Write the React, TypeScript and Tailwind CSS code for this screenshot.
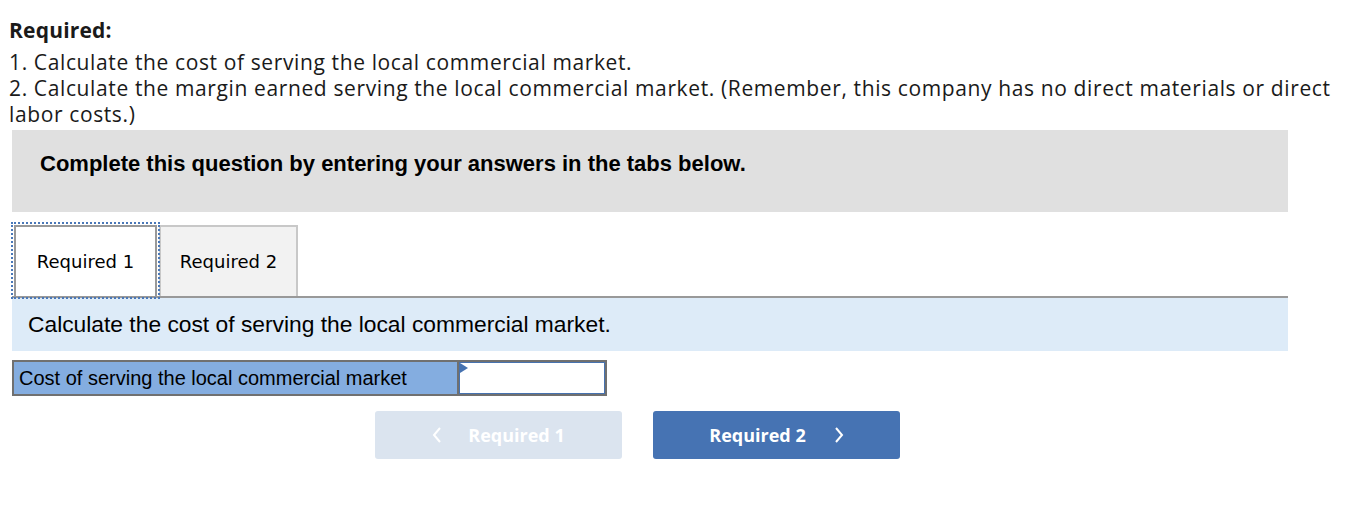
import React from 'react';

const TabButton = ({ label, active }: { label: string; active?: boolean }) => (
  <div
    className={
      active
        ? 'relative flex h-[71px] w-[143px] items-center justify-center border-2 border-b-0 border-[#999999] bg-white outline-2 outline-dotted outline-offset-[1px] outline-[#4a78b8]'
        : 'flex h-[71px] w-[139px] items-center justify-center border-2 border-b-0 border-[#c8c8c8] bg-[#f2f2f2]'
    }
  >
    <span className="font-['DejaVu_Sans',sans-serif] text-[18px] text-black">{label}</span>
  </div>
);

export default function App() {
  return (
    <div className="min-h-[508px] w-[1354px] bg-white pt-[17px] text-black">
      <div className="pl-[9px] pr-[12px] font-['Open_Sans',sans-serif] text-[21px] leading-[26px] tracking-[0.62px] text-[#1a1a1a]">
        <div className="mb-[6px] font-bold tracking-[0.2px]">Required:</div>
        <div>1. Calculate the cost of serving the local commercial market.</div>
        <div>
          2. Calculate the margin earned serving the local commercial market. (Remember, this company has no direct materials or direct labor costs.)
        </div>
      </div>

      <div className="ml-[12px] mt-[3px] w-[1276px]">
        <div className="h-[82px] bg-[#e0e0e0] pl-[28px] pt-[17px] font-['Liberation_Sans',Arial,sans-serif] text-[22px] font-bold">
          Complete this question by entering your answers in the tabs below.
        </div>

        <div className="mt-[13px] flex gap-[2px] pl-[2px]">
          <TabButton label="Required 1" active />
          <TabButton label="Required 2" />
        </div>
        <div className="h-[2px] bg-[#999999]" />

        <div className="flex h-[53px] items-center bg-[#ddebf8] pl-[16px] font-['Liberation_Sans',Arial,sans-serif] text-[22.8px]">
          Calculate the cost of serving the local commercial market.
        </div>

        <div className="mt-[9px] flex h-[36px] w-[595px] border-2 border-[#707070]">
          <div className="flex w-[443px] items-center bg-[#84ade0] pl-[5px] font-['Liberation_Sans',Arial,sans-serif] text-[20px]">
            Cost of serving the local commercial market
          </div>
          <div className="w-[2px] bg-[#707070]" />
          <div className="relative flex-1 border border-[#4672b0] bg-white">
            <svg className="absolute left-0 top-0" width="8" height="10" viewBox="0 0 8 10">
              <polygon points="0,0 8,5 0,10" fill="#4672b0" />
            </svg>
          </div>
        </div>

        <div className="mt-[15px] flex gap-[31px] pl-[363px]">
          <button className="flex h-[48px] w-[247px] items-center justify-center gap-[26px] rounded-[3px] bg-[#dbe4ef] font-['Open_Sans',sans-serif] text-[18px] font-bold text-white">
            <svg width="10" height="16" viewBox="0 0 10 16" fill="none" stroke="white" strokeWidth="2">
              <path d="M8 1 L2 8 L8 15" />
            </svg>
            Required 1
          </button>
          <button className="flex h-[48px] w-[247px] items-center justify-center gap-[28px] rounded-[3px] bg-[#4673b3] font-['Open_Sans',sans-serif] text-[18px] font-bold text-white">
            Required 2
            <svg width="10" height="16" viewBox="0 0 10 16" fill="none" stroke="white" strokeWidth="2">
              <path d="M2 1 L8 8 L2 15" />
            </svg>
          </button>
        </div>
      </div>
    </div>
  );
}
